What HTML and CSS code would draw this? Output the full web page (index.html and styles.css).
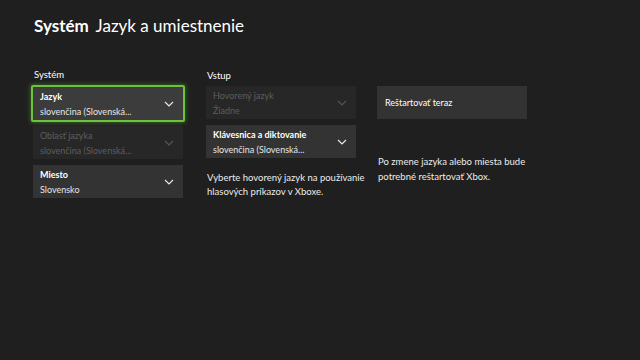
FILE: index.html
```html
<!DOCTYPE html>
<html lang="sk">
<head>
  <meta charset="UTF-8" />
  <title>Systém - Jazyk a umiestnenie</title>
  <link rel="stylesheet" href="styles.css">
</head>
<body>
  <div class="page">
    <h1 class="title"><span class="title-main">Systém</span> Jazyk a umiestnenie</h1>

    <div class="columns">
      <div class="column">
        <div class="group-label">Systém</div>
        <div class="item focused">
          <div class="item-text">
            <div class="item-name">Jazyk</div>
            <div class="item-value">slovenčina (Slovenská...</div>
          </div>
          <svg class="chevron" viewBox="0 0 10 6"><path d="M1 1 L5 5 L9 1" /></svg>
        </div>
        <div class="item disabled">
          <div class="item-text">
            <div class="item-name">Oblasť jazyka</div>
            <div class="item-value">slovenčina (Slovenská...</div>
          </div>
          <svg class="chevron" viewBox="0 0 10 6"><path d="M1 1 L5 5 L9 1" /></svg>
        </div>
        <div class="item">
          <div class="item-text">
            <div class="item-name">Miesto</div>
            <div class="item-value">Slovensko</div>
          </div>
          <svg class="chevron" viewBox="0 0 10 6"><path d="M1 1 L5 5 L9 1" /></svg>
        </div>
      </div>

      <div class="column column-input">
        <div class="group-label">Vstup</div>
        <div class="item disabled">
          <div class="item-text">
            <div class="item-name">Hovorený jazyk</div>
            <div class="item-value">Žiadne</div>
          </div>
          <svg class="chevron" viewBox="0 0 10 6"><path d="M1 1 L5 5 L9 1" /></svg>
        </div>
        <div class="item">
          <div class="item-text">
            <div class="item-name">Klávesnica a diktovanie</div>
            <div class="item-value">slovenčina (Slovenská...</div>
          </div>
          <svg class="chevron" viewBox="0 0 10 6"><path d="M1 1 L5 5 L9 1" /></svg>
        </div>
        <p class="note">Vyberte hovorený jazyk na používanie hlasových príkazov v Xboxe.</p>
      </div>

      <div class="column column-restart">
        <div class="button">Reštartovať teraz</div>
        <p class="note note-restart">Po zmene jazyka alebo miesta bude potrebné reštartovať Xbox.</p>
      </div>
    </div>
  </div>
</body>
</html>
```

FILE: styles.css
```css
body {
  margin: 0;
  background-color: #1f1f1f;
  color: #ffffff;
  font-family: Lato, 'Open Sans', sans-serif;
  width: 640px;
  height: 360px;
  overflow: hidden;
}

.page {
  padding: 13px 0 0 34px;
}

.title {
  margin: 0;
  font-size: 17px;
  font-weight: 400;
  line-height: 25px;
}

.title-main {
  font-weight: 700;
  margin-right: 3px;
}

.columns {
  display: flex;
  gap: 23px;
  margin-top: 30px;
  margin-left: -1px;
}

.column {
  width: 150px;
  display: flex;
  flex-direction: column;
}

.group-label {
  font-size: 9.5px;
  line-height: 14px;
  margin-bottom: 3px;
  padding-left: 1px;
}

.item {
  display: flex;
  align-items: center;
  justify-content: space-between;
  height: 33px;
  padding: 0 9px 0 7px;
  margin-bottom: 6px;
  background-color: #333333;
  box-sizing: border-box;
}

.item-name {
  font-size: 9px;
  line-height: 15px;
  font-weight: 700;
}

.item-value {
  font-size: 9px;
  line-height: 15px;
  color: #e6e6e6;
}

.item.focused {
  height: 37px;
  margin: 0 -2px 4px -2px;
  padding: 0 9px 0 7px;
  border: 2px solid #6cc23c;
  background-color: #3c3c3c;
  box-shadow: 0 0 4px 1px rgba(80, 170, 40, 0.45);
  border-radius: 2px;
}

.item.disabled {
  background-color: #272727;
}

.item.disabled .item-name,
.item.disabled .item-value {
  color: #5e5e5e;
  font-weight: 400;
}

.chevron {
  width: 10px;
  height: 6px;
  fill: none;
  stroke: #e8e8e8;
  stroke-width: 1.2;
}

.item.disabled .chevron {
  stroke: #555555;
}

.column-input {
  margin-top: 1px;
}

.note {
  margin: 7px 0 0 1px;
  font-size: 9.5px;
  line-height: 14px;
  color: #ececec;
  width: 175px;
}

.column-restart {
  padding-top: 18px;
  margin-left: -2px;
}

.button {
  height: 33px;
  display: flex;
  align-items: center;
  padding-left: 8px;
  font-size: 9px;
  background-color: #333333;
}

.note-restart {
  margin-top: 35px;
  line-height: 15px;
}
```
